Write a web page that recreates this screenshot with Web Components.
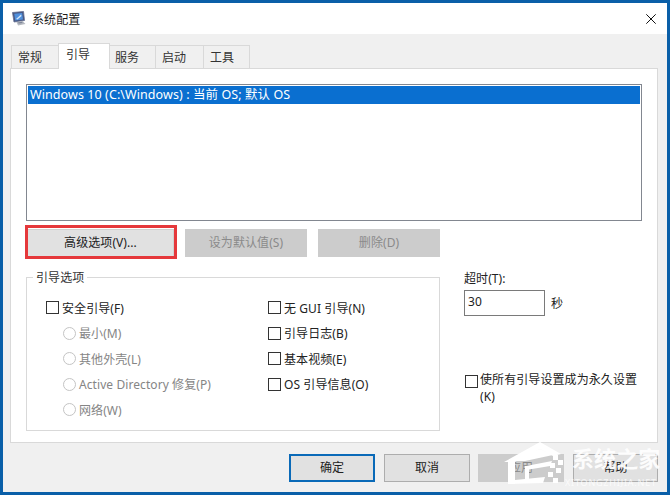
<!DOCTYPE html>
<html lang="zh">
<head>
<meta charset="utf-8">
<title>系统配置</title>
<style>
html, body { margin: 0; padding: 0; background: #f0f0f0; }
body { font: 12px "Noto Sans", "Noto Sans CJK SC", sans-serif; letter-spacing: .08px; color: #222; }
</style>
</head>
<body>
<sys-dialog>
    <sys-tabs slot="tabs"></sys-tabs>
    <sys-panel>
        <boot-list>Windows 10 (C:\Windows) : 当前 OS; 默认 OS</boot-list>
        <div style="display:flex; gap:11px; margin:8px 0 0 1px">
            <sys-button width="147" marked>高级选项(V)...</sys-button>
            <sys-button width="122" disabled>设为默认值(S)</sys-button>
            <sys-button width="122" disabled>删除(D)</sys-button>
        </div>
        <div style="display:flex; margin-top:20px">
            <boot-group legend="引导选项">
                <sys-check>安全引导(F)</sys-check>
                <sys-check>无 GUI 引导(N)</sys-check>
                <sys-radio>最小(M)</sys-radio>
                <sys-check>引导日志(B)</sys-check>
                <sys-radio>其他外壳(L)</sys-radio>
                <sys-check>基本视频(E)</sys-check>
                <sys-radio>Active Directory 修复(P)</sys-radio>
                <sys-check>OS 引导信息(O)</sys-check>
                <sys-radio>网络(W)</sys-radio>
            </boot-group>
            <timeout-box></timeout-box>
        </div>
    </sys-panel>
    <div slot="footer" style="display:contents">
        <sys-button width="86" primary>确定</sys-button>
        <sys-button width="86">取消</sys-button>
        <sys-button width="86" disabled style="margin-left:-1px">应用</sys-button>
        <sys-button width="85">帮助</sys-button>
    </div>
</sys-dialog>

<script>
// Crea una clase simple con su shadow root a partir de un texto html
const componente = (nombre, html, extra) => {
    class Comp extends HTMLElement {
        constructor() {
            super();
            this.attachShadow({ mode: 'open' });
            this.shadowRoot.innerHTML = html;
            if (extra) extra(this);
        }
    }
    customElements.define(nombre, Comp);
};

// Ventana: borde azul, barra de titulo, pestanas, panel y botones
componente('sys-dialog', `
    <style>
        :host { display: flex; flex-direction: column; box-sizing: border-box; width: 670px; height: 495px;
                border: 3px solid #0a5fa8; background: #f0f0f0; position: relative; overflow: hidden; }
        .titulo { display: flex; align-items: center; height: 31px; background: #fff; flex: none; }
        .icono { margin-left: 9px; width: 15px; height: 15px; }
        .texto { margin-left: 5px; font-size: 12px; color: #1a1a1a; }
        .cerrar { margin-left: auto; margin-right: 11px; width: 10px; height: 10px; }
        .tabs { height: 25px; margin: 9px 0 0 7px; flex: none; }
        .cuerpo { margin: 0 9px 0 7px; flex: none; }
        .pie { display: flex; gap: 9px; justify-content: flex-end; margin: 11px 9px 0 0; }
        .marca { position: absolute; left: 488px; top: 436px; }
    </style>
    <div class="titulo">
        <svg class="icono" viewBox="0 0 15 15">
            <path d="M.5 1.5 L11.5 .5 L12.5 9.5 L2 11 Z" fill="#46557f" stroke="#5f6c92" stroke-width=".8"/>
            <path d="M2.2 2.8 L10.2 2 L11 8.4 L3.2 9.4 Z" fill="#4f8fdc"/>
            <path d="M4 8 L9 3.5 L9.6 5 L5.5 8.6 Z" fill="#cfe3f8"/>
            <path d="M4.5 11 L10.5 10 L13.5 13 L6 14.4 Z" fill="#b4b8c0"/>
            <path d="M6 11.4 L10 10.8 L10.6 12 L6.6 12.6 Z" fill="#7f8798"/>
        </svg>
        <span class="texto">系统配置</span>
        <svg class="cerrar" viewBox="0 0 10 10"><path d="M.3.3 9.7 9.7M9.7.3.3 9.7" stroke="#111" stroke-width="1" fill="none"/></svg>
    </div>
    <div class="tabs"><slot name="tabs"></slot></div>
    <div class="cuerpo"><slot></slot></div>
    <div class="pie"><slot name="footer"></slot></div>
    <div class="marca"><sys-watermark></sys-watermark></div>
`);

// Tiras de pestanas, la segunda es la activa
componente('sys-tabs', `
    <style>
        :host { display: flex; align-items: flex-end; height: 25px; position: relative; z-index: 1; }
        .tab { box-sizing: border-box; height: 23px; display: flex; align-items: center; padding: 0 0 1px 6px;
               border: 1px solid #d9d9d9; border-bottom: 0; margin-left: -1px; background: #f0f0f0; color: #333; }
        .activa { height: 26px; margin-bottom: -1px; background: #fff; padding: 0 0 5px 7px; position: relative; z-index: 1; }
    </style>
    <div class="tab" style="width:48px; margin-left:1px">常规</div>
    <div class="tab activa" style="width:52px">引导</div>
    <div class="tab" style="width:47px; padding-left:5px">服务</div>
    <div class="tab" style="width:49px">启动</div>
    <div class="tab" style="width:47px">工具</div>
`);

componente('sys-panel', `
    <style>
        :host { display: block; box-sizing: border-box; height: 375px; background: #fff;
                border: 1px solid #d9d9d9; padding: 15px 15px 0 15px; }
    </style>
    <slot></slot>
`);

// Lista de entradas de arranque con la fila seleccionada
componente('boot-list', `
    <style>
        :host { display: block; box-sizing: border-box; height: 137px; border: 1px solid #828790; padding: 1px; background: #fff; }
        .fila { height: 18px; line-height: 17px; background: #0a6fd0; color: #fff; padding-left: 2px; font-size: 12.5px; white-space: nowrap; }
    </style>
    <div class="fila"><slot></slot></div>
`);

// Boton de Windows 10; width, disabled, primary y marked como atributos
componente('sys-button', `
    <style>
        :host { display: flex; align-items: center; justify-content: center; box-sizing: border-box; height: 28px; padding-bottom: 2px;
                background: #e1e1e1; border: 1px solid #adadad; color: #222; position: relative; flex: none; }
        :host([disabled]) { background: #ccc; border-color: #ccc; color: #8a8a8a; }
        :host([primary]) { border: 2px solid #0a6ab8; }
        :host([marked]) { border-color: #d0d0d0; }
        :host([marked])::after { content: ''; position: absolute; left: -3px; top: -5px; right: -4px; bottom: -3px;
                                 border: 3px solid #e5383b; }
    </style>
    <slot></slot>
`, el => { el.style.width = el.getAttribute('width') + 'px'; });

componente('boot-group', `
    <style>
        :host { display: block; box-sizing: border-box; width: 414px; height: 154px; flex: none; position: relative;
                border: 1px solid #d9d9d9; }
        .leyenda { position: absolute; left: 6px; top: -9px; padding: 0 3px; background: #fff; color: #333; line-height: 17px; }
        .rejilla { display: grid; grid-template-columns: 222px 1fr; grid-auto-rows: 25.5px; padding: 17px 0 0 19px; }
    </style>
    <div class="leyenda"></div>
    <div class="rejilla"><slot></slot></div>
`, el => { el.shadowRoot.querySelector('.leyenda').textContent = el.getAttribute('legend'); });

componente('sys-check', `
    <style>
        :host { display: flex; align-items: center; gap: 3px; color: #222; }
        .caja { box-sizing: border-box; width: 13px; height: 13px; border: 1px solid #333; background: #fff; flex: none; }
    </style>
    <div class="caja"></div><span><slot></slot></span>
`);

componente('sys-radio', `
    <style>
        :host { display: flex; align-items: center; gap: 3px; margin-left: 17px; color: #858585; }
        .bola { box-sizing: border-box; width: 13px; height: 13px; border: 1px solid #c4c4c4; border-radius: 50%; background: #fff; flex: none; }
    </style>
    <div class="bola"></div><span><slot></slot></span>
`);

// Columna derecha: tiempo de espera y casilla de ajustes permanentes
componente('timeout-box', `
    <style>
        :host { display: flex; flex-direction: column; margin-left: 24px; color: #222; }
        .etiqueta { line-height: 17px; margin-top: -7px; }
        .fila { display: flex; align-items: center; gap: 6px; margin-top: 3px; }
        .entrada { box-sizing: border-box; width: 81px; height: 26px; border: 1px solid #7a7a7a; padding-left: 3px; line-height: 22px; }
        .permanente { display: flex; gap: 2px; margin-top: 55px; width: 180px; line-height: 17px; }
        .caja { box-sizing: border-box; width: 13px; height: 13px; border: 1px solid #333; margin: 4px 0 0 1px; flex: none; }
    </style>
    <div class="etiqueta">超时(T):</div>
    <div class="fila"><div class="entrada">30</div><span>秒</span></div>
    <div class="permanente"><div class="caja"></div><span>使所有引导设置成为永久设置(K)</span></div>
`);

// Marca de agua blanca sobre la esquina inferior
componente('sys-watermark', `
    <style>
        :host { display: block; position: relative; width: 175px; height: 56px; color: #fff; }
        svg { position: absolute; left: 0; top: 0; }
        .nombre { position: absolute; left: 81px; top: 5px; font: bold 22px/26px "Noto Sans CJK SC", sans-serif; white-space: nowrap; opacity: .92; }
        .web { position: absolute; left: 74px; top: 38px; font: 9px/12px "Noto Sans", sans-serif; letter-spacing: .8px; white-space: nowrap; opacity: .75; }
    </style>
    <svg width="80" height="56" viewBox="0 0 80 56">
        <path d="M13 23 L49 3 L70 15 L62 17 L49 10 L24 23 Z" fill="#fff"/>
        <path d="M17 22 H24 V45 H17 Z" fill="#fff"/>
        <path d="M24 20 L49 10 L62 16 L34 22 L24 22 Z" fill="#fff"/>
        <path d="M35 27 L61 22 L59 27 L35 31 Z" fill="#fff"/>
        <path d="M34 27 H38 V42 H34 Z" fill="#fff"/>
        <path d="M24 41 L54 38 L52 44 L17 45 Z" fill="#fff"/>
        <path d="M62 16h5v5h-5zM67 21h5v5h-5zM59 24h5v5h-5zM65 29h5v5h-5zM57 33h5v5h-5zM62 39h5v5h-5z" fill="#fff"/>
    </svg>
    <div class="nombre">系统之家</div>
    <div class="web">XITONGZHIJIA.NET</div>
`);
</script>
</body>
</html>
